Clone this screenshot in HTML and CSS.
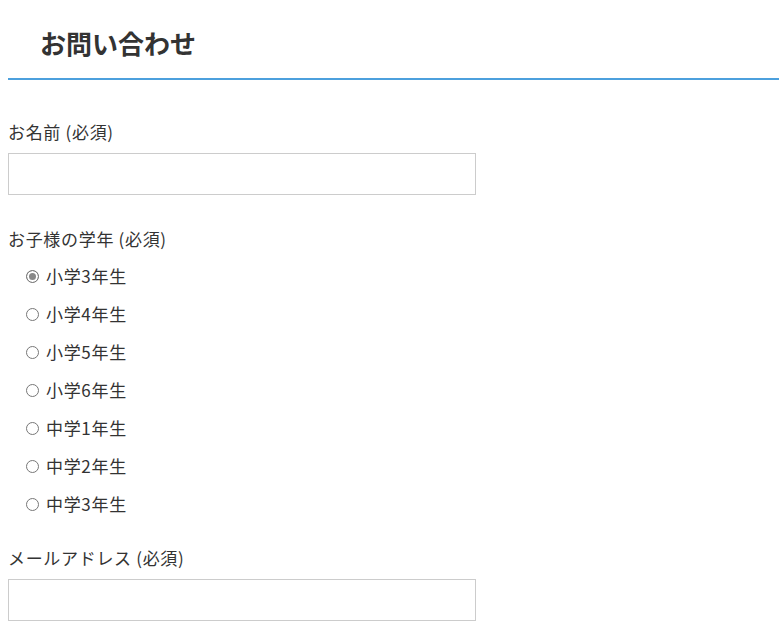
FILE: index.html
```html
<!DOCTYPE html>
<html lang="ja">
<head>
    <meta charset="UTF-8">
    <meta name="viewport" content="width=device-width, initial-scale=1.0">
    <title>お問い合わせ</title>
    <link rel="stylesheet" href="styles.css">
</head>
<body>

    <h2 class="page-title">お問い合わせ</h2>

    <form class="contact-form">
        <div class="field">
            <label class="field-label" for="name">お名前 (必須)</label>
            <input class="text-input" type="text" id="name">
        </div>

        <div class="field field-radio">
            <span class="field-label">お子様の学年 (必須)</span>
            <div class="radio-list">
                <label class="radio-item"><input type="radio" name="grade" checked> 小学3年生</label>
                <label class="radio-item"><input type="radio" name="grade"> 小学4年生</label>
                <label class="radio-item"><input type="radio" name="grade"> 小学5年生</label>
                <label class="radio-item"><input type="radio" name="grade"> 小学6年生</label>
                <label class="radio-item"><input type="radio" name="grade"> 中学1年生</label>
                <label class="radio-item"><input type="radio" name="grade"> 中学2年生</label>
                <label class="radio-item"><input type="radio" name="grade"> 中学3年生</label>
            </div>
        </div>

        <div class="field">
            <label class="field-label" for="email">メールアドレス (必須)</label>
            <input class="text-input" type="email" id="email">
        </div>
    </form>

</body>
</html>
```

FILE: styles.css
```css
body {
    font-family: "Noto Sans CJK JP", "Noto Sans", sans-serif;
    color: #333;
    background-color: #fff;
    margin: 0 0 0 8px;
    font-size: 17px;
    letter-spacing: 0.04em;
}

.page-title {
    margin: 0;
    padding: 25px 0 17px 32px;
    font-size: 26px;
    line-height: 36px;
    font-weight: bold;
    letter-spacing: 0;
    color: #333;
    border-bottom: 2px solid #4ca0dd;
}

.contact-form {
    margin-top: 40px;
}

.field {
    margin-bottom: 32px;
}

.field-radio {
    margin-bottom: 23px;
}

.field-label {
    display: block;
    line-height: 24px;
    margin-bottom: 9px;
}

.text-input {
    display: block;
    box-sizing: border-box;
    width: 468px;
    height: 42px;
    margin: 0;
    border: 1px solid #ccc;
    font-size: 16px;
    padding: 6px 10px;
}

.radio-list {
    margin-top: -3px;
}

.radio-item {
    display: flex;
    align-items: center;
    height: 38px;
    padding-left: 18px;
    line-height: 24px;
}

.radio-item input {
    appearance: none;
    -webkit-appearance: none;
    width: 13px;
    height: 13px;
    margin: 0 7px 0 0;
    border: 1px solid #777;
    border-radius: 50%;
    box-sizing: border-box;
    background-color: #fff;
}

.radio-item input:checked {
    background-color: #888;
    box-shadow: inset 0 0 0 2px #fff;
}
```
